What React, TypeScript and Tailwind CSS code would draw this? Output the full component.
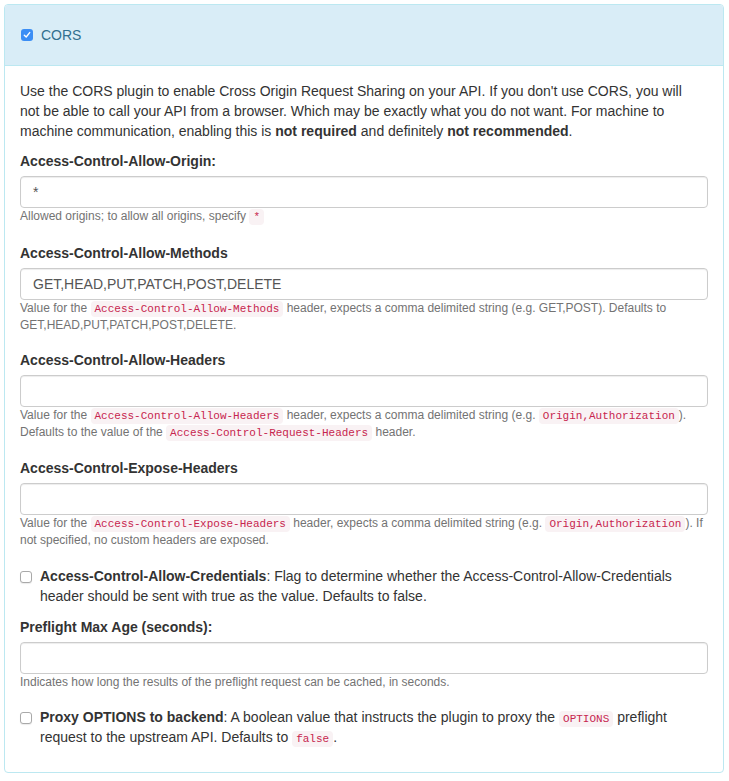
import { FunctionComponent, JSX, ReactNode } from "react";

const Code: FunctionComponent<{ children: ReactNode }> = ({ children }) => (
  <code className="rounded-[4px] bg-[#f9f2f4] px-[4px] py-[2px] font-['Liberation_Mono',monospace] text-[11px] leading-[12px] text-[#c7254e]">
    {children}
  </code>
);

const Box: FunctionComponent<{ checked?: boolean }> = ({ checked }) =>
  checked ? (
    <span className="mt-[4px] flex h-[12px] w-[12px] shrink-0 items-center justify-center rounded-[3px] bg-[#3b8ef5]">
      <svg width="8" height="8" viewBox="0 0 8 8" fill="none">
        <path d="M1.3 4.2 L3.2 6 L6.7 1.6" stroke="white" strokeWidth="1.4" strokeLinecap="round" strokeLinejoin="round" />
      </svg>
    </span>
  ) : (
    <span className="mt-[5px] h-[12px] w-[12px] shrink-0 rounded-[3px] border border-[#a9a9a9] bg-white shadow-[0_1px_1px_rgba(0,0,0,0.08)]" />
  );

// margin after each group differs a touch in the original, so it is passed in
const Field: FunctionComponent<{
  label: string;
  value?: string;
  help: ReactNode;
  className: string;
}> = ({ label, value, help, className }) => (
  <div className={`flex flex-col ${className}`}>
    <div className="mb-[5px] font-bold leading-[20px] text-[#333]">{label}</div>
    <div className="flex h-[32px] items-center rounded-[4px] border border-[#ccc] bg-white px-[12px] text-[14px] text-[#555] shadow-[inset_0_1px_1px_rgba(0,0,0,0.075)]">
      {value}
    </div>
    <div className="text-[12px] leading-[17px] text-[#737373]">{help}</div>
  </div>
);

const CheckRow: FunctionComponent<{ children: ReactNode; className?: string }> = ({
  children,
  className,
}) => (
  <div className={`flex items-start gap-[8px] leading-[20px] text-[#333] ${className ?? ""}`}>
    <Box />
    <div>{children}</div>
  </div>
);

const App = (): JSX.Element => {
  return (
    <div className="min-h-[781px] bg-white pl-[4px] pt-[4px] font-['Liberation_Sans',Arial,sans-serif] text-[14px]">
      <div className="w-[720px] overflow-hidden rounded-[4px] border border-[#bce8f1] bg-white">
        <div className="border-b border-[#bce8f1] bg-[#d9edf7] px-[16px] py-[20px]">
          <div className="flex items-start gap-[8px] leading-[20px] text-[#31708f]">
            <Box checked />
            <span>CORS</span>
          </div>
        </div>
        <div className="px-[15px] pb-[15px] pt-[15px]">
          <p className="mb-[10px] pr-[12px] leading-[20px] text-[#333]">
            Use the CORS plugin to enable Cross Origin Request Sharing on your API. If you don't use CORS, you will
            not be able to call your API from a browser. Which may be exactly what you do not want. For machine to
            machine communication, enabling this is <b>not required</b> and definitely <b>not recommended</b>.
          </p>
          <Field
            className="mb-[18px]"
            label="Access-Control-Allow-Origin:"
            value="*"
            help={
              <>
                Allowed origins; to allow all origins, specify <Code>*</Code>
              </>
            }
          />
          <Field
            className="mb-[16px]"
            label="Access-Control-Allow-Methods"
            value="GET,HEAD,PUT,PATCH,POST,DELETE"
            help={
              <>
                Value for the <Code>Access-Control-Allow-Methods</Code> header, expects a comma delimited string (e.g.
                GET,POST). Defaults to GET,HEAD,PUT,PATCH,POST,DELETE.
              </>
            }
          />
          <Field
            className="mb-[17px]"
            label="Access-Control-Allow-Headers"
            help={
              <>
                Value for the <Code>Access-Control-Allow-Headers</Code> header, expects a comma delimited string (e.g.{" "}
                <Code>Origin,Authorization</Code>). Defaults to the value of the{" "}
                <Code>Access-Control-Request-Headers</Code> header.
              </>
            }
          />
          <Field
            className="mb-[17px]"
            label="Access-Control-Expose-Headers"
            help={
              <>
                Value for the <Code>Access-Control-Expose-Headers</Code> header, expects a comma delimited string (e.g.{" "}
                <Code>Origin,Authorization</Code>). If not specified, no custom headers are exposed.
              </>
            }
          />
          <CheckRow className="mb-[11px]">
            <b>Access-Control-Allow-Credentials</b>: Flag to determine whether the Access-Control-Allow-Credentials
            header should be sent with true as the value. Defaults to false.
          </CheckRow>
          <Field
            className="mb-[16px]"
            label="Preflight Max Age (seconds):"
            help="Indicates how long the results of the preflight request can be cached, in seconds."
          />
          <CheckRow className="mb-[10px]">
            <b>Proxy OPTIONS to backend</b>: A boolean value that instructs the plugin to proxy the{" "}
            <Code>OPTIONS</Code> preflight request to the upstream API. Defaults to <Code>false</Code>.
          </CheckRow>
        </div>
      </div>
    </div>
  );
};

export default App;
